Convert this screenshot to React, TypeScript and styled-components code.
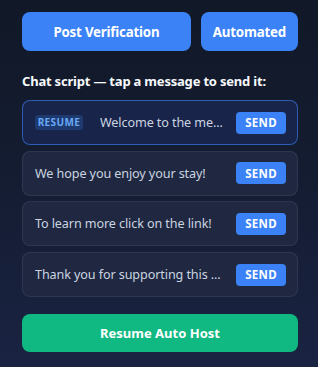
import React from "react";
import styled, { createGlobalStyle } from "styled-components";

const Global = createGlobalStyle`
  html, body { margin: 0; padding: 0; height: 100%; }
  body {
    background: linear-gradient(180deg, #111827 0%, #141c31 45%, #1a2342 100%);
    font-family: "Noto Sans", "Open Sans", sans-serif;
    color: #f1f5f9;
  }
  #root { min-height: 367px; }
`;

const Page = styled.div`
  display: flex;
  flex-direction: column;
  padding: 12px 20px 12px 22px;
  box-sizing: border-box;
`;

const TopBar = styled.div`
  display: flex;
  gap: 10px;
`;

const TopButton = styled.button<{ $grow?: boolean }>`
  flex: ${(p) => (p.$grow ? "1" : "0 0 auto")};
  height: 39px;
  padding: 0 12px;
  border: none;
  border-radius: 8px;
  background: #3b82f6;
  color: #ffffff;
  font-family: inherit;
  font-weight: 700;
  font-size: 13.3px;
  letter-spacing: -0.2px;
`;

const Heading = styled.div`
  margin-top: 21px;
  font-size: 13px;
  font-weight: 700;
  color: #f8fafc;
  letter-spacing: -0.2px;
`;

const List = styled.div`
  display: flex;
  flex-direction: column;
  gap: 5.7px;
  margin-top: 10px;
`;

const Row = styled.div<{ $active?: boolean }>`
  display: flex;
  align-items: center;
  height: 45px;
  box-sizing: border-box;
  padding: 0 11px 0 12px;
  border-radius: 8px;
  border: 1px solid ${(p) => (p.$active ? "rgba(59,130,246,0.6)" : "rgba(148,163,184,0.13)")};
  background: ${(p) => (p.$active ? "#19244a" : "#1f2840")};
`;

const Badge = styled.span`
  flex: 0 0 auto;
  width: 48px;
  box-sizing: border-box;
  text-align: center;
  height: 15px;
  line-height: 15px;
  margin-right: 17px;
  border-radius: 3px;
  background: #1e3a6e;
  color: #6aa8f8;
  font-size: 10px;
  font-weight: 700;
  letter-spacing: 0.4px;
`;

const Message = styled.span`
  flex: 1;
  min-width: 0;
  white-space: nowrap;
  overflow: hidden;
  text-overflow: ellipsis;
  font-size: 12.6px;
  color: #cbd5e1;
  letter-spacing: -0.1px;
  padding-right: 8px;
`;

const SendButton = styled.button`
  flex: 0 0 auto;
  width: 50px;
  height: 22px;
  border: none;
  border-radius: 4px;
  background: #3b82f6;
  color: #ffffff;
  font-family: inherit;
  font-size: 11.5px;
  font-weight: 700;
  letter-spacing: 0.3px;
  padding: 0;
`;

const ResumeButton = styled.button`
  margin-top: 17px;
  height: 38px;
  border: none;
  border-radius: 8px;
  background: #10b981;
  color: #ffffff;
  font-family: inherit;
  font-size: 13px;
  font-weight: 700;
`;

const messages = [
  { text: "Welcome to the me...", resume: true },
  { text: "We hope you enjoy your stay!" },
  { text: "To learn more click on the link!" },
  { text: "Thank you for supporting this ..." },
];

export default function App() {
  return (
    <>
      <Global />
      <Page>
        <TopBar>
          <TopButton $grow>Post Verification</TopButton>
          <TopButton>Automated</TopButton>
        </TopBar>
        <Heading>Chat script — tap a message to send it:</Heading>
        <List>
          {messages.map((m, i) => (
            <Row key={i} $active={m.resume}>
              {m.resume && <Badge>RESUME</Badge>}
              <Message>{m.text}</Message>
              <SendButton>SEND</SendButton>
            </Row>
          ))}
        </List>
        <ResumeButton>Resume Auto Host</ResumeButton>
      </Page>
    </>
  );
}
